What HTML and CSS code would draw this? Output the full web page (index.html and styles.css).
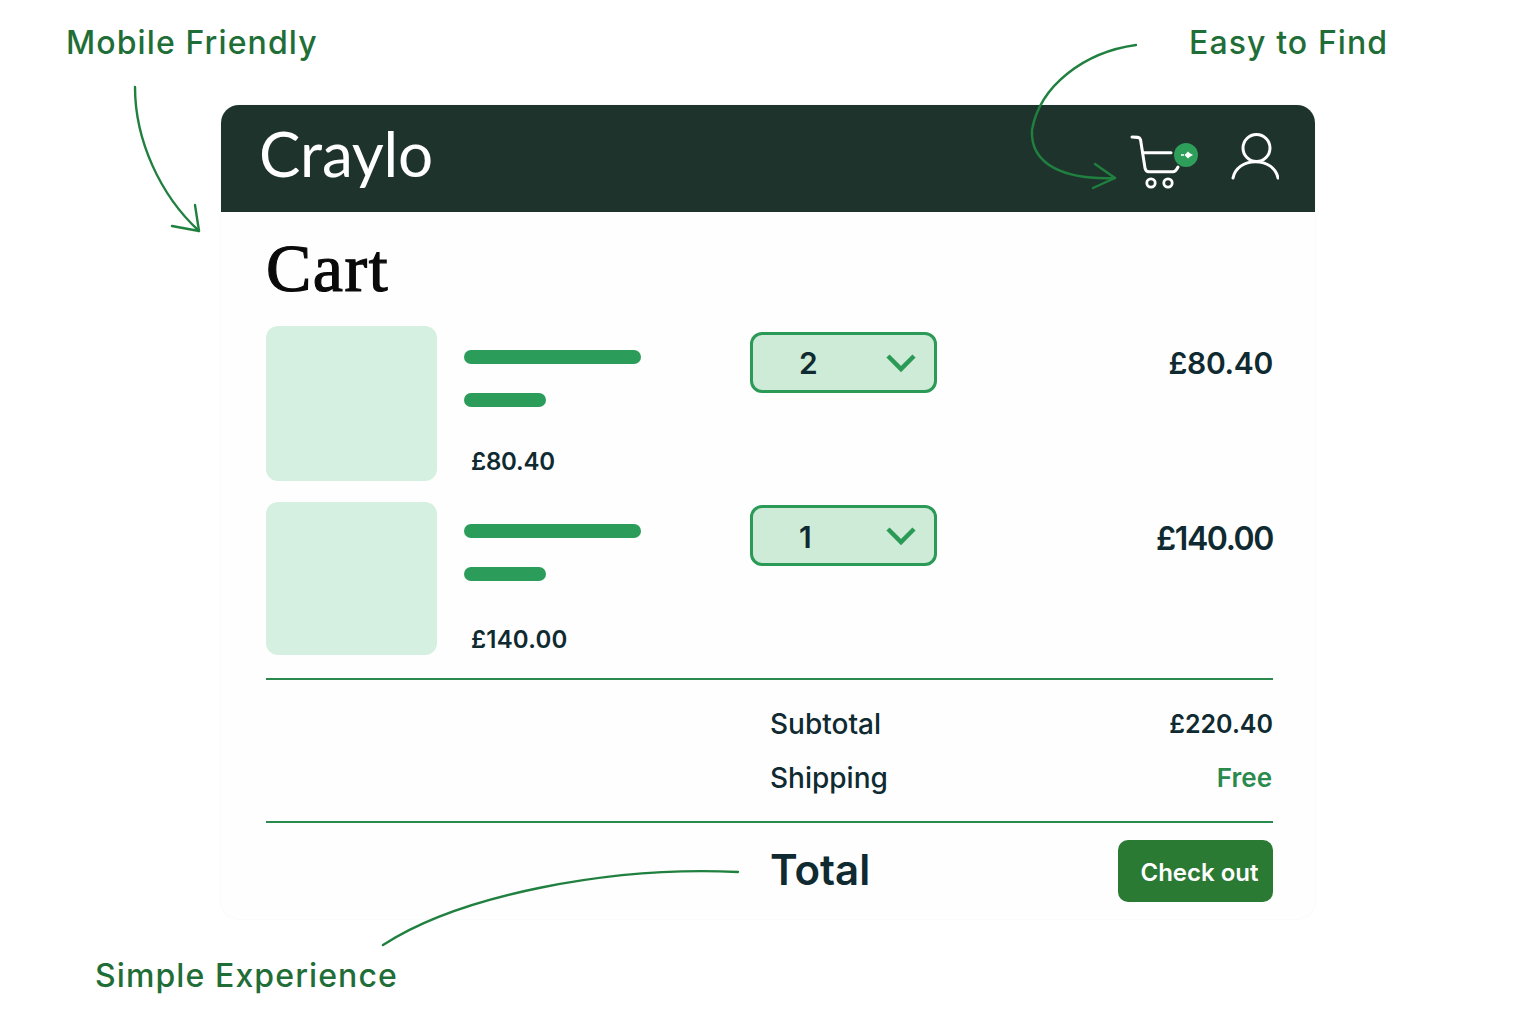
FILE: index.html
```html
<!DOCTYPE html>
<html lang="en">
<head>
<meta charset="UTF-8">
<meta name="viewport" content="width=device-width, initial-scale=1.0">
<title>Craylo Cart</title>
<link rel="stylesheet" href="styles.css">
</head>
<body>
<div id="canvas">
    <div class="card">
        <div class="topbar">
            <div class="logo">Craylo</div>
            <div class="topbar-icons">
                <svg class="cart-icon" width="70" height="56" viewBox="0 0 70 56">
                    <path d="M3 4 C8 4 10.500 4 11.500 6.500 L16 35 C16.500 38 18 38.800 20 38.800 H44 C46.500 38.800 47.500 37 49 34" fill="none" stroke="#fff" stroke-width="3" stroke-linecap="round"/>
                    <path d="M14 19.700 H42" fill="none" stroke="#fff" stroke-width="3" stroke-linecap="round"/>
                    <circle cx="22" cy="50" r="4.200" fill="none" stroke="#fff" stroke-width="2.800"/>
                    <circle cx="39" cy="50" r="4.200" fill="none" stroke="#fff" stroke-width="2.800"/>
                    <circle cx="57" cy="22" r="12" fill="#2e9e5b"/>
                    <path d="M52 22 H55" fill="none" stroke="#fff" stroke-width="1.500"/>
                    <path d="M55.500 22 L59 18.500 L60.500 20 L64 22 L60.500 24 L59 25.500 Z" fill="#fff"/>
                </svg>
                <svg class="user-icon" width="48" height="50" viewBox="0 0 48 50">
                    <circle cx="25.500" cy="15" r="13.500" fill="none" stroke="#fff" stroke-width="3"/>
                    <path d="M2 45 C4 35 13 28.700 24.500 28.700 C36 28.700 45 35 47 45" fill="none" stroke="#fff" stroke-width="3" stroke-linecap="round"/>
                </svg>
            </div>
        </div>
        <div class="content">
            <h1>Cart</h1>
            <div class="item first">
                <div class="thumb"></div>
                <div class="info">
                    <div class="bar long"></div>
                    <div class="bar short"></div>
                    <div class="unit-price">£80.40</div>
                </div>
                <div class="qty">
                    <span class="qty-num">2</span>
                    <svg width="32" height="20" viewBox="0 0 32 20"><path d="M3 3 L16 16 L29 3" fill="none" stroke="#2a9a56" stroke-width="4.500"/></svg>
                </div>
                <div class="line-total">£80.40</div>
            </div>
            <div class="item second">
                <div class="thumb"></div>
                <div class="info">
                    <div class="bar long"></div>
                    <div class="bar short"></div>
                    <div class="unit-price">£140.00</div>
                </div>
                <div class="qty">
                    <span class="qty-num">1</span>
                    <svg width="32" height="20" viewBox="0 0 32 20"><path d="M3 3 L16 16 L29 3" fill="none" stroke="#2a9a56" stroke-width="4.500"/></svg>
                </div>
                <div class="line-total big">£140.00</div>
            </div>
            <div class="summary">
                <div class="summary-row"><span>Subtotal</span><span class="amount">£220.40</span></div>
                <div class="summary-row"><span>Shipping</span><span class="free">Free</span></div>
            </div>
            <div class="total-row">
                <span class="total-label">Total</span>
                <button class="checkout">Check out</button>
            </div>
        </div>
    </div>

    <div class="note note-mobile">Mobile Friendly</div>
    <div class="note note-find">Easy to Find</div>
    <div class="note note-simple">Simple Experience</div>

    <svg class="arrows" width="1536" height="1024" viewBox="0 0 1536 1024">
        <g fill="none" stroke="#20803f" stroke-width="2.400" stroke-linecap="round" stroke-linejoin="round">
            <path d="M135 87 C135 140 160 195 199 231"/>
            <path d="M172 226 L199 231 L195 205"/>
            <path d="M1136 45 C1085 52 1040 85 1032 130 C1030 165 1065 180 1115 178"/>
            <path d="M1095 164 L1115 178 L1093 188"/>
            <path d="M383 945 C460 895 610 866 738 872"/>
        </g>
    </svg>
</div>
</body>
</html>
```

FILE: styles.css
```css
* {
    box-sizing: border-box;
}
body {
    margin: 0;
    background-color: #fff;
    font-family: "Inter", "Noto Sans", sans-serif;
    color: #0f2a30;
}
#canvas {
    position: relative;
    width: 1536px;
    height: 1024px;
    padding: 105px 0 0 221px;
    overflow: hidden;
}
.card {
    width: 1094px;
    height: 814px;
    background-color: #fefefe;
    border-radius: 18px;
    box-shadow: 0 0 0 1px #f9fbfa;
}
.topbar {
    display: flex;
    justify-content: space-between;
    align-items: center;
    height: 107px;
    padding: 0 36px 0 38px;
    background-color: #1f332d;
    border-radius: 18px 18px 0 0;
}
.logo {
    color: #fff;
    font-family: "Lato", sans-serif;
    font-size: 62px;
    letter-spacing: -0.2px;
    margin-top: -11px;
}
.topbar-icons {
    display: flex;
    align-items: flex-start;
    gap: 32px;
    margin-top: 5px;
}
.content {
    padding: 0 42px 0 45px;
}
h1 {
    margin: 0;
    height: 114px;
    padding-top: 16px;
    font-family: "Liberation Serif", serif;
    font-size: 68px;
    line-height: 80px;
    font-weight: 400;
    letter-spacing: 1.500px;
    color: #0a0a0a;
    -webkit-text-stroke: 1.200px #0a0a0a;
}
.item {
    display: grid;
    grid-template-columns: 171px 313px 187px 1fr;
    align-items: start;
}
.item.first {
    height: 176px;
}
.item.second {
    height: 178px;
    border-bottom: 2px solid #2a8a4e;
}
.thumb {
    height: 155px;
    background-color: #d5f0e0;
    border-radius: 12px;
}
.second .thumb {
    height: 153px;
}
.info {
    padding: 23.500px 0 0 27px;
}
.second .info {
    padding-top: 22px;
}
.bar {
    height: 14px;
    background-color: #2c9c5a;
    border-radius: 7px;
}
.bar.long {
    width: 177px;
}
.bar.short {
    width: 82px;
    margin-top: 29px;
}
.unit-price {
    margin: 40px 0 0 7px;
    font-size: 24px;
    line-height: 30px;
    font-weight: 600;
    letter-spacing: -0.2px;
}
.second .unit-price {
    margin-top: 44px;
    letter-spacing: 0.2px;
}
.qty {
    display: flex;
    justify-content: space-between;
    align-items: center;
    height: 61px;
    margin-top: 6px;
    padding: 0 17px 0 46px;
    background-color: #cdebd6;
    border: 3px solid #2a9a56;
    border-radius: 12px;
    font-size: 30px;
    font-weight: 600;
}
.second .qty {
    margin-top: 3px;
}
.second .qty-num {
    padding-top: 3px;
}
.line-total {
    margin-top: 18px;
    text-align: right;
    font-size: 30px;
    line-height: 38px;
    font-weight: 600;
    letter-spacing: -0.300px;
}
.line-total.big {
    font-size: 32px;
    letter-spacing: -1.400px;
}
.summary {
    height: 141px;
    margin-left: 504px;
    padding-top: 25px;
}
.summary-row {
    display: flex;
    justify-content: space-between;
    align-items: flex-start;
    height: 54px;
    font-size: 28px;
    line-height: 38px;
    font-weight: 500;
}
.amount {
    font-size: 25px;
    font-weight: 600;
}
.free {
    margin-right: 1px;
    font-size: 26px;
    font-weight: 600;
    color: #2a8a4e;
}
.total-row {
    display: flex;
    justify-content: space-between;
    align-items: center;
    height: 100px;
    padding: 0 0 0 504px;
    border-top: 2px solid #2a8a4e;
}
.total-label {
    font-size: 42px;
    font-weight: 600;
    margin-top: -6px;
}
.checkout {
    width: 155px;
    height: 62px;
    margin-top: -2px;
    padding: 3px 0 0 8px;
    background-color: #2a7a33;
    color: #fff;
    border: none;
    border-radius: 10px;
    font-family: "Inter", sans-serif;
    font-size: 24px;
    font-weight: 600;
}
.note {
    position: absolute;
    color: #1f6e38;
    font-family: "Inter", sans-serif;
    font-size: 32px;
    line-height: 40px;
    font-weight: 500;
    letter-spacing: 1.1px;
}
.note-mobile {
    left: 66px;
    top: 23px;
}
.note-find {
    left: 1189px;
    top: 23px;
}
.note-simple {
    left: 95px;
    top: 956px;
}
.arrows {
    position: absolute;
    left: 0;
    top: 0;
    pointer-events: none;
}
```
